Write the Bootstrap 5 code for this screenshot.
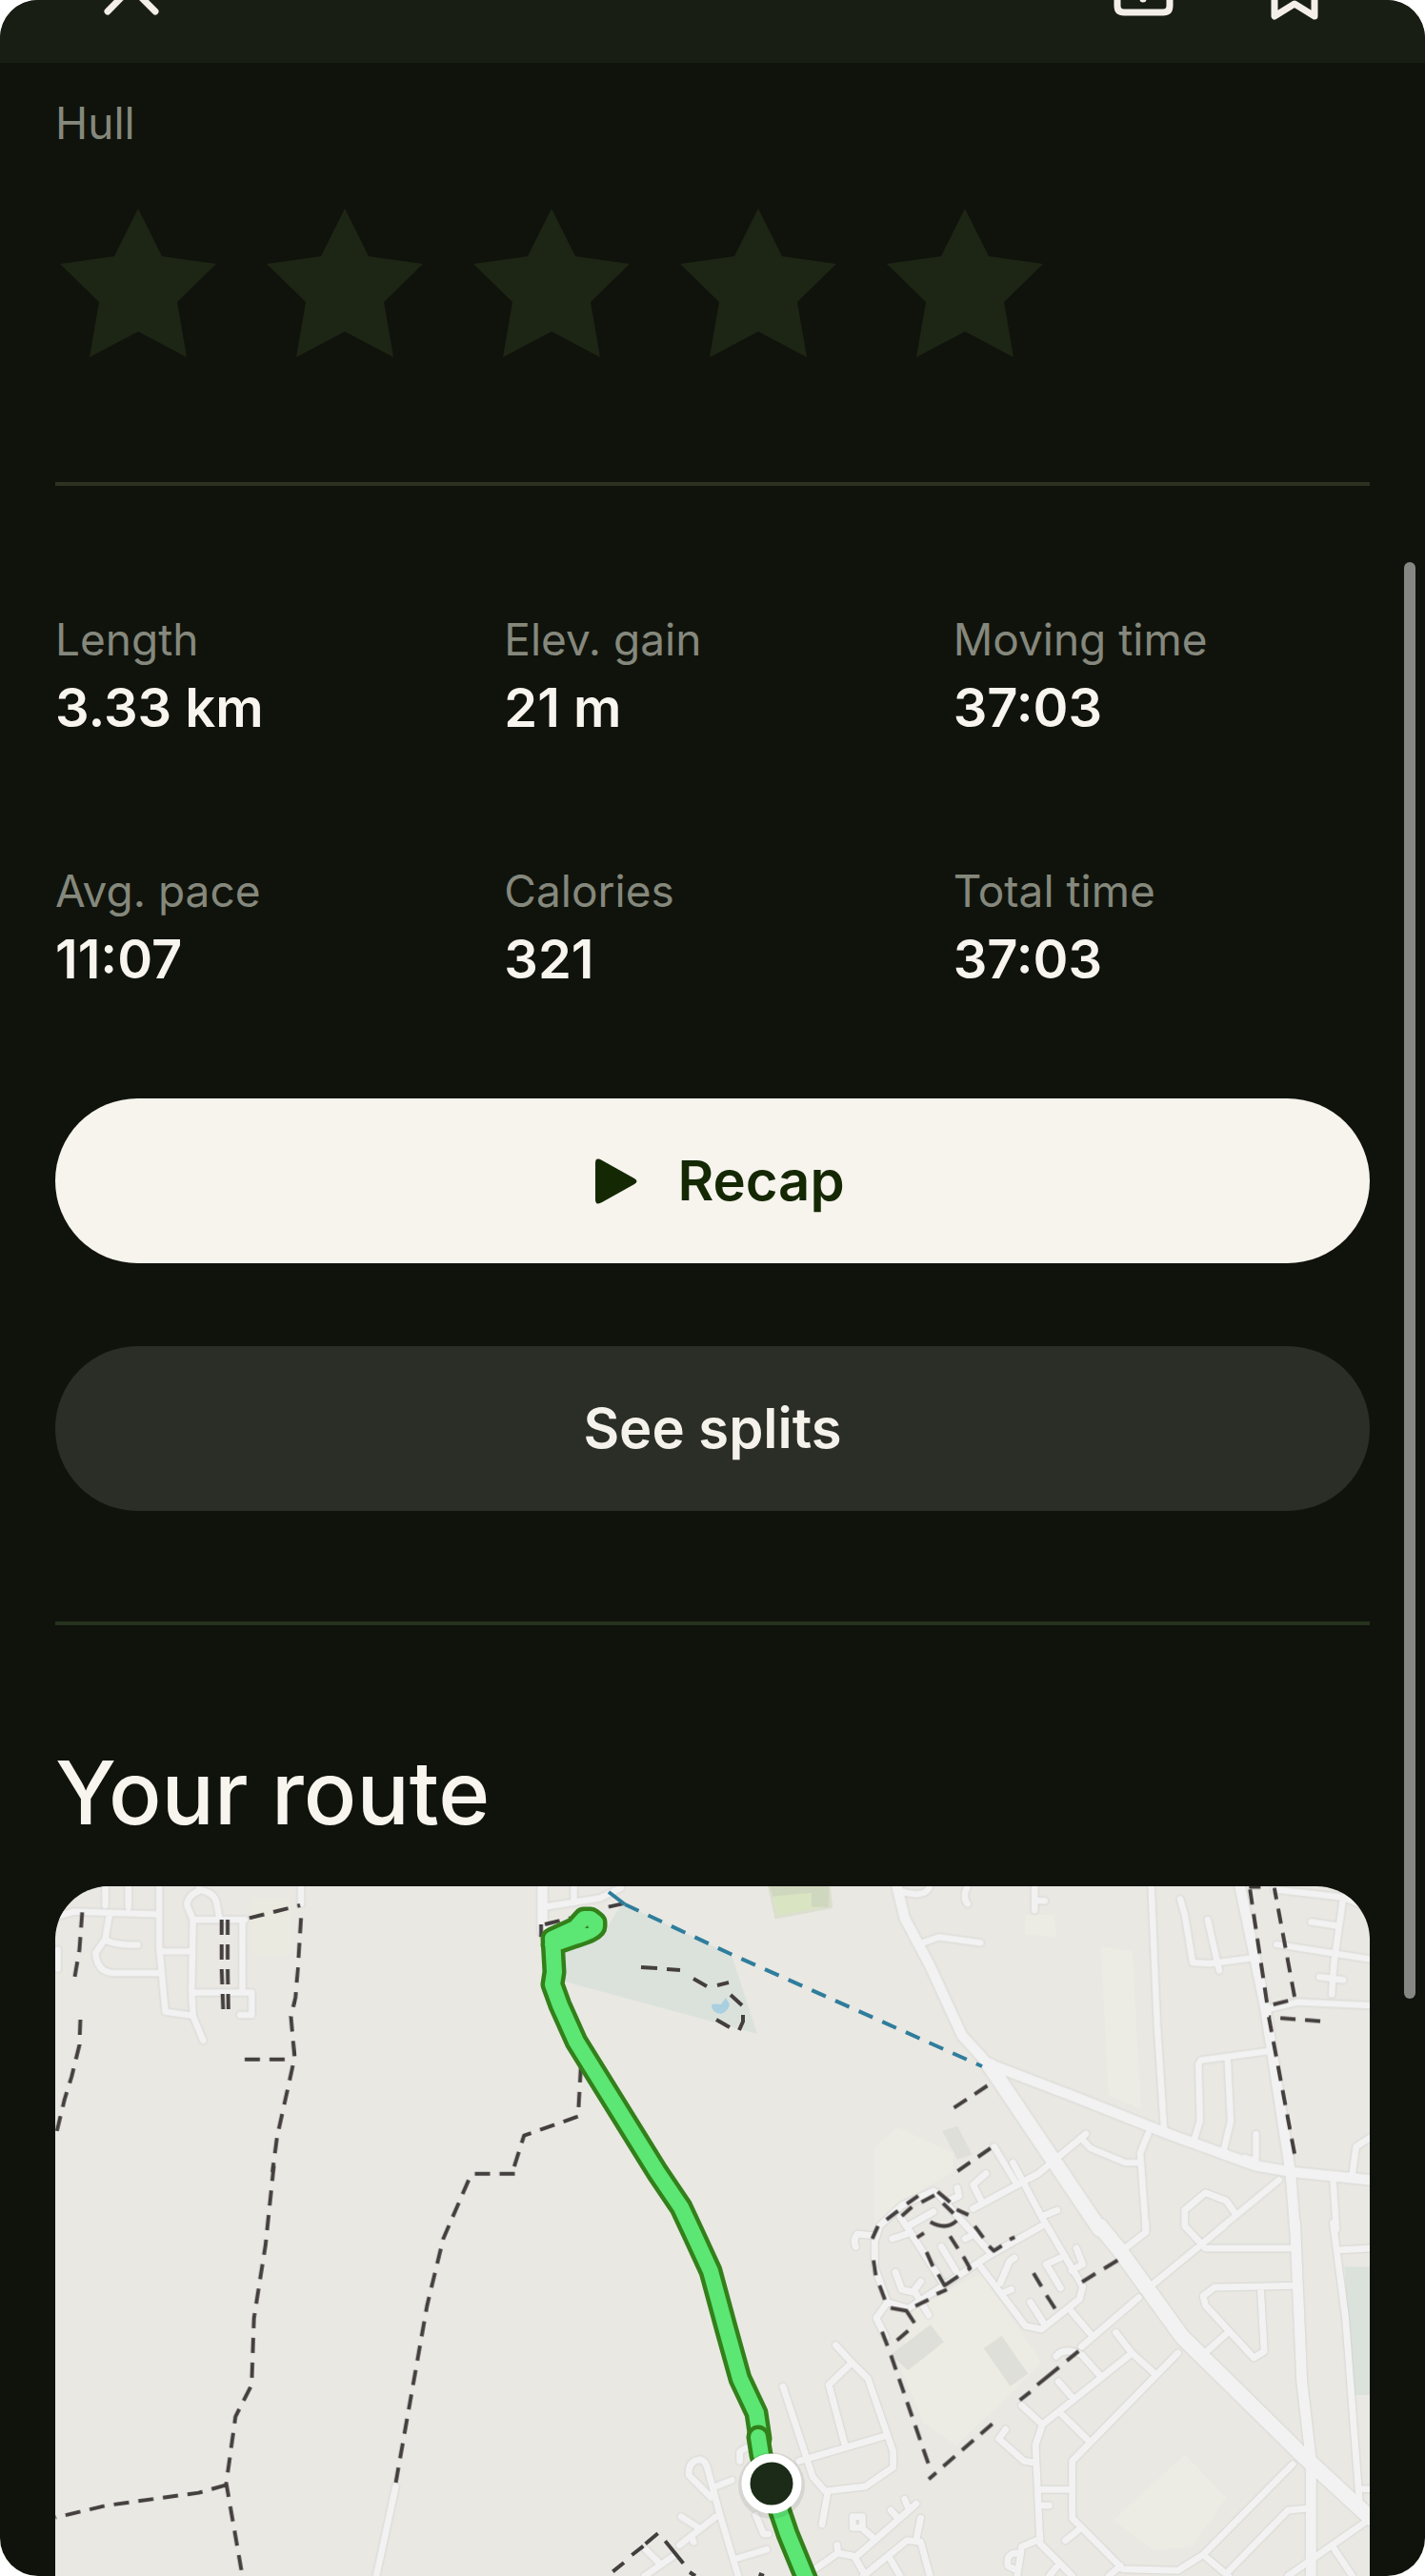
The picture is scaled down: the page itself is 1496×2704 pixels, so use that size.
<!DOCTYPE html>
<html lang="en">
<head>
<meta charset="utf-8">
<meta name="viewport" content="width=device-width, initial-scale=1">
<title>Activity summary</title>
<link href="https://cdn.jsdelivr.net/npm/bootstrap@5.3.0/dist/css/bootstrap.min.css" rel="stylesheet">
<script src="https://cdn.jsdelivr.net/npm/bootstrap@5.3.0/dist/js/bootstrap.bundle.min.js"></script>
<style>
  body { background: #fff; font-family: Inter, "Liberation Sans", sans-serif; }
  .phone { background: #10130c; color: #f8f4ee; border-radius: 40px; }
  /* the top bar is half scrolled out of view */
  .topbar { background: #191e14; height: 132px; margin-top: -66px; padding: 0 101px 42px; }
  .topbar .btn { color: #f3efe8; line-height: 1; }
  .topbar .actions { gap: 87px; }
  .page { padding: 33px 58px 0; }
  .caption { color: #85887c; font-size: 46px; line-height: 60px; }
  .rating { gap: 53px; margin-top: 60px; padding-left: 5px; }
  .rating .btn { color: #1d2615; line-height: 1; }
  .divider { height: 4px; margin: 131px 0; background: #2b3221; opacity: 1; border: 0; }
  .stats { --bs-gutter-x: 34px; --bs-gutter-y: 126px; }
  .figure-value { font-size: 56px; line-height: 72px; font-weight: 600; margin-top: 6px; }
  .actions-stack { gap: 87px; margin-top: 110px; }
  .pill { height: 173px; font-size: 58px; font-weight: 600; gap: 42px; border: 0; }
  .pill-light, .pill-light:hover { background: #f7f3ed; color: #142803; }
  .pill-dark, .pill-dark:hover { background: #2b2e27; color: #f5f1eb; }
  .divider.lower { margin: 116px 0 123px; background: #26321e; }
  .section-title { font-size: 92px; line-height: 106px; font-weight: 500; margin: 0 0 45px; }
  .route-map { border-radius: 56px 56px 0 0; background: #e9e8e3; }
  .scroll-thumb { right: 10px; top: 590px; width: 12px; height: 1508px; background: #868784; }
  .route-map path { vector-effect: non-scaling-stroke; stroke-linejoin: round; }
  .roads { fill: none; stroke: #f2f2f2; stroke-width: 7; stroke-linecap: round; filter: drop-shadow(0 0 1px #c4c4c1); }
  .roads .avenue { stroke-width: 11; }
  .roads .artery { stroke-width: 16; }
  .trails { fill: none; stroke: #443f3e; stroke-width: 4; }
  .trails .dashed { stroke-dasharray: 16 10; }
  .field { fill: #edece4; }
  .block { fill: #dfdfd9; }
  .wood { fill: #dbe2dc; }
</style>
</head>
<body>
<div class="phone position-relative overflow-hidden min-vh-100 d-flex flex-column">
  <header class="topbar d-flex align-items-end justify-content-between flex-shrink-0">
    <button class="btn p-0 border-0" type="button" aria-label="Close">
      <svg width="72" height="72" viewBox="0 0 72 72" fill="none" stroke="currentColor" stroke-width="7" stroke-linecap="round"><path d="M12 60 61 10M12 10l50 50"/></svg>
    </button>
    <div class="actions d-flex">
      <button class="btn p-0 border-0" type="button" aria-label="Share">
        <svg width="72" height="72" viewBox="0 0 72 72" fill="none" stroke="currentColor" stroke-width="7" stroke-linecap="round" stroke-linejoin="round"><path d="M22 24h-6q-7 0-7 7v23q0 7 7 7h41q7 0 7-7V31q0-7-7-7h-6M36 47V5M24 16 36 4l12 12"/></svg>
      </button>
      <button class="btn p-0 border-0" type="button" aria-label="Bookmark">
        <svg width="72" height="72" viewBox="0 0 72 72" fill="none" stroke="currentColor" stroke-width="7" stroke-linejoin="round"><path d="M15 65V12q0-6 6-6h30q6 0 6 6v53L36 52Z"/></svg>
      </button>
    </div>
  </header>

  <main class="page flex-grow-1 d-flex flex-column">
    <div class="caption">Hull</div>
    <div class="rating d-flex" role="group" aria-label="Rating">
      <button class="btn p-0 border-0" type="button" aria-label="1 star"><svg class="d-block" width="164" height="156" viewBox="0 0 164 156"><path id="star" fill="currentColor" d="M82 0 107 50 164 58 123 98 133 156 82 129 31 156 41 98 0 58 57 50Z"/></svg></button>
      <button class="btn p-0 border-0" type="button" aria-label="2 stars"><svg class="d-block" width="164" height="156" viewBox="0 0 164 156"><use href="#star"/></svg></button>
      <button class="btn p-0 border-0" type="button" aria-label="3 stars"><svg class="d-block" width="164" height="156" viewBox="0 0 164 156"><use href="#star"/></svg></button>
      <button class="btn p-0 border-0" type="button" aria-label="4 stars"><svg class="d-block" width="164" height="156" viewBox="0 0 164 156"><use href="#star"/></svg></button>
      <button class="btn p-0 border-0" type="button" aria-label="5 stars"><svg class="d-block" width="164" height="156" viewBox="0 0 164 156"><use href="#star"/></svg></button>
    </div>

    <hr class="divider">

    <div class="stats row mt-0">
      <div class="col-4 mt-0"><div class="caption">Length</div><div class="figure-value">3.33 km</div></div>
      <div class="col-4 mt-0"><div class="caption">Elev. gain</div><div class="figure-value">21 m</div></div>
      <div class="col-4 mt-0"><div class="caption">Moving time</div><div class="figure-value">37:03</div></div>
      <div class="col-4"><div class="caption">Avg. pace</div><div class="figure-value">11:07</div></div>
      <div class="col-4"><div class="caption">Calories</div><div class="figure-value">321</div></div>
      <div class="col-4"><div class="caption">Total time</div><div class="figure-value">37:03</div></div>
    </div>

    <div class="actions-stack d-flex flex-column">
      <button class="pill pill-light btn rounded-pill d-flex align-items-center justify-content-center" type="button">
        <svg width="60" height="48" viewBox="-16 0 60 48" fill="currentColor"><path d="M0 5Q0-2 7 2L41 21Q46 24 41 27L7 46Q0 50 0 43Z"/></svg>
        Recap
      </button>
      <button class="pill pill-dark btn rounded-pill d-flex align-items-center justify-content-center" type="button">See splits</button>
    </div>

    <hr class="divider lower">

    <h2 class="section-title">Your route</h2>
    <div class="route-map overflow-hidden flex-grow-1">
      <svg class="d-block w-100" viewBox="58 1980 1380 724" role="img" aria-label="Map of the recorded route">
        <!-- land cover -->
        <g>
          <path class="wood" d="M653 1998 768 2052 795 2135 593 2080 587 2043 633 2030Z"/>
          <path fill="#a9cfe0" d="M747 2104q5-1 10 0l5-7 4 7q-2 8-9 10-10-1-10-10Z"/>
          <path fill="#eaeae0" d="M265 1992h40v60h-40Z"/>
        </g>
        <g transform="translate(740 1960) scale(.4821 .3333)">
          <path fill="#d9e4c3" stroke="#dcded0" stroke-width="3" d="M140 60H270L275 125 155 158Z"/>
          <path fill="#cfd8bf" d="M140 60H270V125H232V80L148 92Z"/>
          <path class="field" d="M697 150h63l5 70-68-10ZM862 250l68 15 20 495-70-40ZM370 880 420 820 540 900V960L430 1050 370 1140Z"/>
          <path class="block" d="M517 830 550 815 582 905 550 920Z"/>
        </g>
        <g transform="translate(740 2300) scale(.4821 .3333)">
          <path class="field" d="M1045 830 1135 965 1060 1120 975 1130 890 1035Z"/>
          <path class="wood" d="M1393 238H1450V642H1410Z"/>
        </g>
        <g transform="translate(880 2280) scale(.3333)">
          <path class="field" d="M450 320 640 600 500 740 370 860 270 790 190 600 240 430Z"/>
          <path class="block" d="M290 480 333 535 220 625 165 575ZM515 515 598 635 542 675 458 555Z"/>
        </g>

        <!-- streets -->
        <g class="roads">
          <g transform="translate(0 1800) scale(.4847 .3333)">
            <path d="M120 636 160 620 340 628M228 540V600M278 540V605M237 630 228 705 207 750Q210 810 245 813H345M230 710Q250 725 298 725M350 745H412M430 555Q405 570 405 600L418 645 415 870 418 945M430 550Q468 560 470 600L475 640M418 645H530M525 645V870M418 875H545V945H520M125 740V800M652 540V595M1243 540V585M1180 605 1300 577 1345 545"/>
            <path d="M345 540V730L358 935 418 948 440 1025"/>
            <path class="avenue" d="M1175 540V680"/>
          </g>
          <g transform="translate(740 1960) scale(.4821 .3333)">
            <path d="M425 75Q480 100 490 60M572 60Q560 95 572 115M718 60V135M718 105H740M470 240 510 220 600 238M972 60 985 500 1000 830M1035 100 1045 150 1062 300 1100 303 1195 285M1095 165 1120 325M1240 70 1390 95 1450 130M1390 95 1370 300 1365 400M1320 172 1378 185M1245 243 1450 290M1338 345 1390 355M1230 445 1290 425 1450 435M1222 580 1080 608 1075 620 1078 800 1065 860M1138 600 1145 800 1130 890M1200 840V925L1175 915M965 840 948 900 960 1140M948 930H915L840 885 820 855M1450 850 1418 880 1410 965M1250 985 1120 1140M1368 985 1375 1140M630 880 680 1000"/>
            <path class="avenue" d="M1165 60 1220 440 1275 960 1285 1140"/>
            <path class="avenue" d="M418 60 435 160 490 310 560 530 620 625"/>
            <path class="artery" d="M620 625 860 1140"/>
            <path class="avenue" d="M620 620 800 720 1000 835 1200 940 1280 960 1450 985"/>
          </g>
          <g transform="translate(740 2300) scale(.4821 .3333)">
            <path d="M1368 100 1395 400 1425 970M1425 938H1450M1385 185 1450 180M1130 110 970 300M1045 60V110L1090 180H1285M1045 60 1090 5 1135 30 1155 70M960 100V130L915 180M1285 298 1110 303 1085 330 1090 360 1195 525 1218 505 1210 303M1135 450 1085 515M945 335 820 490M1030 510 800 850V1030L910 1190 1030 1195 1085 1145 1280 860M1085 1145 1140 1212M725 940H800M835 785 775 700M690 675 735 735 720 800 730 1110 800 1212M735 735 930 510 980 575M930 510 895 445M860 580 820 515Q780 490 765 520M800 650 770 600M718 855 695 850 640 780 655 750M730 1095 690 1120 680 1212M680 1140Q655 1140 660 1180L680 1195M730 990H750M820 1060 785 1100M1310 1000 1270 1005 1135 1205M1450 1030 1270 1212M1365 1115 1410 1212M905 1180 880 1212M765 1185 750 1212"/>
            <path d="M205 850 395 770M170 615 235 900 262 945 350 930 410 870V820L355 590 320 540 270 610 305 800M320 540 285 485M268 945 255 1050M322 1025H343V1060H322ZM345 1065 365 1090M330 1150 460 985M420 1030 405 1005M445 1005 435 970M470 1030 460 1100M345 1212 440 1100 470 1105 490 1212M400 1150 425 1212M240 1190 290 1140 325 1150 350 1212M290 1140 288 1115"/>
            <path class="avenue" d="M1285 100 1300 600 1320 850V1212"/>
            <path class="artery" d="M860 110 900 180 1040 460 1300 830 1450 1030"/>
          </g>
          <g transform="translate(600 2430) scale(.3333)">
            <path d="M440 575 370 505Q365 460 405 455 425 460 430 490L465 620 525 822M455 540 505 520M455 635 340 725M345 635 400 670M378 700 385 715M230 822 320 760M235 740 275 780M510 770 615 738M530 460V430L550 418M580 630 605 690H620"/>
          </g>
          <g transform="translate(880 2280) scale(.3333)">
            <path d="M110 200 60 195Q45 215 55 235M300 60 200 105 130 170 115 220V300L155 410 220 430 480 260 640 170M310 65 480 255M155 410 120 460 150 520M195 140 330 350M220 170 300 125M170 210 215 195M325 235 370 310M180 315 200 370 235 378 260 345M240 375 285 450M450 300 590 485 640 495 760 400 770 360 640 140 550-30M640 140 690 120M425 115 630 5 780-120M450 90 425 40 465 5M510 350 540 280 555 270M520 380 545 370M605 410 650 480M700 270 655 290 700 365M735 310 770 290 750 240M735 440 795 510M400 210 430 195M350 90 380 75 375 50"/>
          </g>
          <g transform="translate(0 2280) scale(.4847 .3333)"><path d="M857 990 815 1272"/></g>
        </g>

        <!-- footpaths -->
        <g class="trails">
          <g transform="translate(0 1800) scale(.4847 .3333)">
            <path class="dashed" d="M178 622 172 740 160 840M174 960 172 1040 155 1140 140 1210 120 1330M480 645V800L484 955M493 645V800L495 955M540 640 650 600M652 640 645 800 640 890 630 950 638 1080 600 1330 590 1440M530 1085H620M1172 660V700M1180 660 1235 640M1318 605 1348 595M1258 1110 1252 1265 1135 1325 1110 1440"/>
          </g>
          <path d="M673 2065 690 2066M700 2067 714 2068M728 2077 742 2085M753 2084 765 2081M767 2094 779 2105M780 2115V2122L776 2131M752 2120 766 2128"/>
          <g transform="translate(740 1960) scale(.4821 .3333)">
            <path class="dashed" d="M1185 62H1210M1187 70 1225 437 1285 415 1240 65M1340 485 1228 472M1228 472 1285 910M615 688 540 760M622 885 550 957"/>
          </g>
          <g transform="translate(0 2280) scale(.4847 .3333)">
            <path class="dashed" d="M593-20 575 230 550 460 545 670 510 770 490 980 525 1272M490 985 430 1010 230 1050 120 1088M1115 5H1028M1015 25 960 210 925 420 857 980"/>
          </g>
          <g transform="translate(600 2430) scale(.3333)">
            <path d="M130 808 165 780M190 756 226 728M233 721 272 688M295 712 352 782M372 810 390 822M590 816 606 822"/>
          </g>
          <g transform="translate(880 2280) scale(.3333)">
            <path d="M313 62 352 95M330 98 363 130M373 118 410 135M430 170 457 207M475 233 490 248 515 232M540 212 556 205M303 73 262 95M252 75 216 100M232 110 200 138M188 122 152 150M125 170 107 210M111 278 118 325M130 357 147 402M165 428 215 437 240 475M220 500 185 530M138 503 155 547M290 157Q340 185 373 153M270 192 248 206M278 252 298 297M352 202 377 241M394 266 415 303 408 308M378 328 335 357 315 322M342 370 310 384M284 402 243 422M615 318 640 360M656 388 683 430M768 346 810 320M837 304 880 278M572 718 605 692M627 670 695 615M720 594 757 564"/>
            <path class="dashed" d="M166 577 293 945M485 793 285 967"/>
          </g>
        </g>

        <!-- cycle connection -->
        <path fill="none" stroke="#2f7d9c" stroke-width="4" stroke-dasharray="16 11" d="M656 1999 767 2051 1031 2169"/>
        <path fill="none" stroke="#2f7d9c" stroke-width="4" d="M639 1986 656 1999"/>

        <!-- recorded route -->
        <g fill="none" stroke-linecap="round">
          <path stroke="#33801a" stroke-width="25" d="M580 2041 603 2033Q625 2026 625 2022V2018L620 2014H613L604 2024 580 2035 582 2070 580 2083 588 2105 605 2143 690 2280 715 2317 729 2347 746 2384 762 2443 777 2497 794 2533 798 2560"/>
          <path stroke="#5ce673" stroke-width="16" d="M580 2041 603 2033Q625 2026 625 2022V2018L620 2014H613L604 2024 580 2035 582 2070 580 2083 588 2105 605 2143 690 2280 715 2317 729 2347 746 2384 762 2443 777 2497 794 2533 798 2560"/>
          <path fill="#33801a" d="M614 2024 617 2021 618 2024Z"/>
          <path stroke="#33801a" stroke-width="25" d="M796 2558 799 2577 809 2607 827 2660 850 2716"/>
          <path stroke="#5ce673" stroke-width="16" d="M796 2558 799 2577 809 2607 827 2660 850 2716"/>
        </g>
        <circle cx="810" cy="2609" r="35" fill="#000" opacity=".08"/>
        <circle cx="810" cy="2607" r="27" fill="#1b2b17" stroke="#fff" stroke-width="9"/>
      </svg>
    </div>
  </main>
  <div class="scroll-thumb position-absolute rounded-pill"></div>
</div>
</body>
</html>
